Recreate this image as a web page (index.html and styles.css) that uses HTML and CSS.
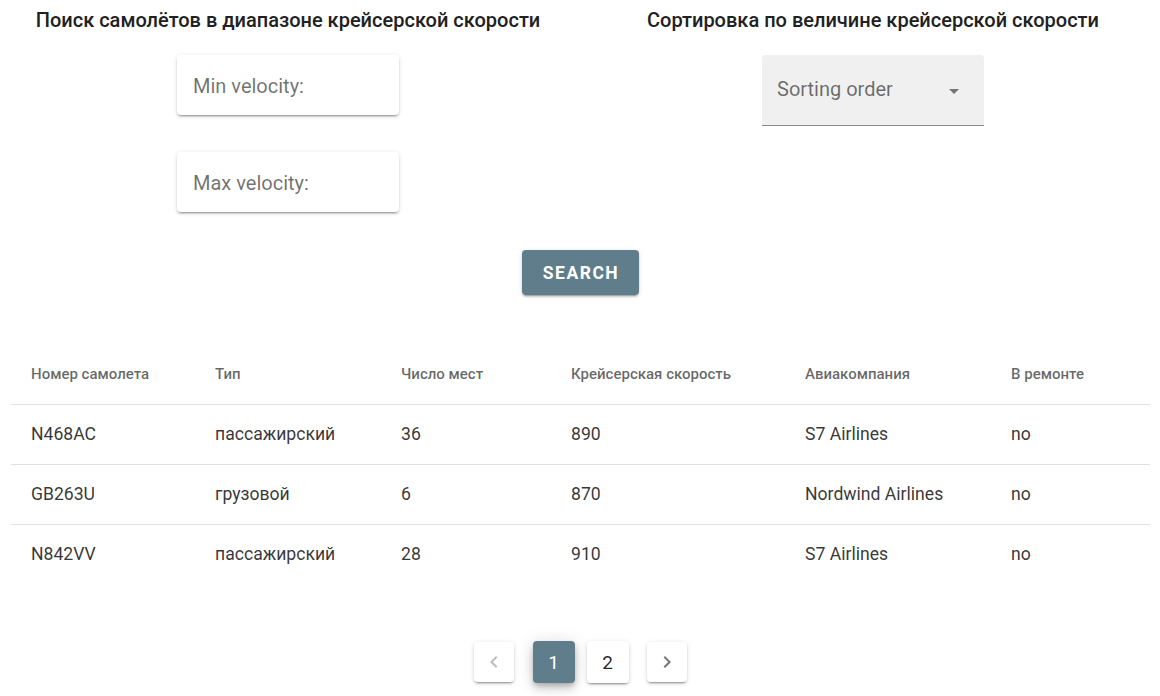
FILE: index.html
```html
<!DOCTYPE html>
<html lang="ru">
<head>
<meta charset="utf-8">
<title>Самолёты</title>
<link rel="stylesheet" href="styles.css">
</head>
<body>
<div class="app">
  <section class="filters">
    <div class="col col-left">
      <h3 class="title">Поиск самолётов в диапазоне крейсерской скорости</h3>
      <div class="solo-field"><span class="placeholder">Min velocity:</span></div>
      <div class="solo-field second"><span class="placeholder">Max velocity:</span></div>
    </div>
    <div class="col col-right">
      <h3 class="title">Сортировка по величине крейсерской скорости</h3>
      <div class="select-field">
        <span class="placeholder">Sorting order</span>
        <svg class="arrow" width="24" height="24" viewBox="0 0 24 24"><path d="M7 10l5 5 5-5z" fill="#757575"/></svg>
      </div>
    </div>
  </section>
  <div class="actions">
    <button class="btn-search">SEARCH</button>
  </div>
  <div class="table-wrap">
    <table class="data-table">
      <colgroup>
        <col class="c1"><col class="c2"><col class="c3"><col class="c4"><col class="c5"><col>
      </colgroup>
      <thead>
        <tr><th>Номер самолета</th><th>Тип</th><th>Число мест</th><th>Крейсерская скорость</th><th>Авиакомпания</th><th>В ремонте</th></tr>
      </thead>
      <tbody>
        <tr><td>N468AC</td><td>пассажирский</td><td>36</td><td>890</td><td>S7 Airlines</td><td>no</td></tr>
        <tr><td>GB263U</td><td>грузовой</td><td>6</td><td>870</td><td>Nordwind Airlines</td><td>no</td></tr>
        <tr><td>N842VV</td><td>пассажирский</td><td>28</td><td>910</td><td>S7 Airlines</td><td>no</td></tr>
      </tbody>
    </table>
  </div>
  <nav class="pagination">
    <button class="pg-nav prev" aria-label="prev">
      <svg width="24" height="24" viewBox="0 0 24 24"><path d="M15.41 7.41L14 6l-6 6 6 6 1.41-1.41L10.83 12z" fill="#bdbdbd"/></svg>
    </button>
    <button class="pg-item active">1</button>
    <button class="pg-item">2</button>
    <button class="pg-nav next" aria-label="next">
      <svg width="24" height="24" viewBox="0 0 24 24"><path d="M10 6L8.59 7.41 13.17 12l-4.58 4.59L10 18l6-6z" fill="#757575"/></svg>
    </button>
  </nav>
</div>
</body>
</html>
```

FILE: styles.css
```css
* { box-sizing: border-box; }
html, body { margin: 0; padding: 0; background: #fff; }
body {
  font-family: Roboto, "Noto Sans", sans-serif;
  color: rgba(0,0,0,0.87);
  width: 1160px;
  height: 696px;
  overflow: hidden;
}
.filters {
  display: grid;
  grid-template-columns: 576px 1fr;
  column-gap: 10px;
}
.col {
  display: flex;
  flex-direction: column;
  align-items: center;
}
.title {
  margin: 8px 0 0;
  font-size: 20px;
  line-height: 24px;
  font-weight: 500;
  color: #212121;
  white-space: nowrap;
}
.solo-field {
  margin-top: 23px;
  width: 222px;
  height: 60px;
  border-radius: 4px;
  background: #fff;
  box-shadow: 0 3px 1px -2px rgba(0,0,0,.2), 0 2px 2px 0 rgba(0,0,0,.14), 0 1px 5px 0 rgba(0,0,0,.12);
  display: flex;
  align-items: center;
  padding: 2px 16px 0;
}
.solo-field.second { margin-top: 37px; }
.placeholder {
  font-size: 20px;
  color: rgba(0,0,0,0.56);
}
.select-field {
  margin-top: 23px;
  width: 222px;
  height: 71px;
  background: #f0f0f0;
  border-radius: 4px 4px 0 0;
  border-bottom: 1px solid #8a8a8a;
  display: flex;
  align-items: center;
  justify-content: space-between;
  padding: 0 18px 0 15px;
}
.select-field .placeholder { margin-top: -3px; }
.arrow { margin-top: 2px; }
.actions {
  display: flex;
  justify-content: center;
  margin-top: 38px;
}
.btn-search {
  width: 117px;
  height: 45px;
  border: none;
  border-radius: 4px;
  background: #607d8b;
  color: #fff;
  font-family: Roboto, sans-serif;
  font-weight: 700;
  font-size: 17.5px;
  letter-spacing: 1.5px;
  padding: 0 0 0 2px;
  box-shadow: 0 3px 1px -2px rgba(0,0,0,.2), 0 2px 2px 0 rgba(0,0,0,.14), 0 1px 5px 0 rgba(0,0,0,.12);
}
.table-wrap {
  margin-top: 49px;
  padding: 0 10px 0 11px;
}
.data-table {
  width: 100%;
  border-collapse: collapse;
  table-layout: fixed;
}
.c1 { width: 184px; }
.c2 { width: 186px; }
.c3 { width: 170px; }
.c4 { width: 234px; }
.c5 { width: 206px; }
.data-table th, .data-table td {
  text-align: left;
  padding: 0 20px;
  height: 60px;
}
.data-table th {
  font-size: 15px;
  font-weight: 500;
  color: rgba(0,0,0,0.6);
  border-bottom: 1px solid #e0e0e0;
}
.data-table td {
  font-size: 17.6px;
  color: rgba(0,0,0,0.8);
}
.data-table tbody tr + tr td { border-top: 1px solid #e0e0e0; }
.pagination {
  margin-top: 57px;
  display: flex;
  justify-content: center;
  align-items: center;
}
.pg-nav, .pg-item {
  border: none;
  background: #fff;
  border-radius: 4px;
  padding: 0;
  display: flex;
  align-items: center;
  justify-content: center;
  font-family: Roboto, sans-serif;
  box-shadow: 0 3px 1px -2px rgba(0,0,0,.2), 0 2px 2px 0 rgba(0,0,0,.14), 0 1px 5px 0 rgba(0,0,0,.12);
}
.pg-nav { width: 40px; height: 40px; }
.prev { margin-right: 19px; }
.next { margin-left: 18px; }
.pg-item {
  width: 42px;
  height: 42px;
  font-size: 19px;
  color: rgba(0,0,0,0.87);
}
.pg-item + .pg-item { margin-left: 12px; }
.pg-item.active {
  background: #607d8b;
  color: #fff;
  box-shadow: 0 3px 5px -1px rgba(0,0,0,.2), 0 6px 10px 0 rgba(0,0,0,.14), 0 1px 18px 0 rgba(0,0,0,.12);
}
```
